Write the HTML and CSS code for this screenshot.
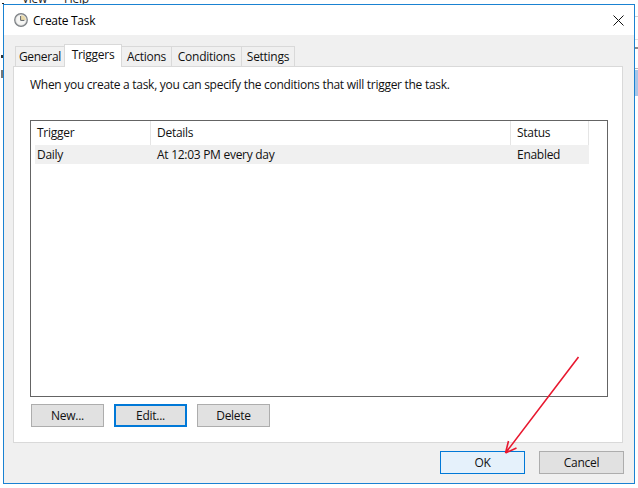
FILE: index.html
```html
<!DOCTYPE html>
<html lang="en">
<head>
<meta charset="utf-8">
<title>Create Task</title>
<link rel="stylesheet" href="styles.css">
</head>
<body>
<div class="behind">View Help</div>
<div class="frag f1"></div>
<div class="frag f2"></div>
<div class="frag f3"></div>
<div class="frag f4"></div>
<div class="frag f5"></div>
<div class="frag f6"></div>
<div class="frag f7"></div>
<div class="frag f8"></div>
<div class="window">
  <header class="titlebar">
    <svg class="clock" width="14" height="14" viewBox="0 0 14 14">
      <circle cx="7" cy="7" r="6.3" fill="#dcdcdc" stroke="#7c8084" stroke-width="1.2"/>
      <circle cx="7" cy="7" r="4.8" fill="#f6f6f4"/>
      <path d="M7 7V2.2A4.8 4.8 0 0 1 11.8 7Z" fill="#e9d9a8"/>
      <path d="M6.6 3V7.4H10.4" fill="none" stroke="#5f6468" stroke-width="1"/>
    </svg>
    <span class="title">Create Task</span>
    <svg class="close" width="11" height="11" viewBox="0 0 11 11"><path d="M.5 .5L10.5 10.5M10.5 .5L.5 10.5" stroke="#111" stroke-width="1" fill="none"/></svg>
  </header>
  <main class="content">
    <nav class="tabs">
      <div class="tab t1">General</div>
      <div class="tab t2 active">Triggers</div>
      <div class="tab t3">Actions</div>
      <div class="tab t4">Conditions</div>
      <div class="tab t5">Settings</div>
    </nav>
    <section class="panel">
      <p class="intro">When you create a task, you can specify the conditions that will trigger the task.</p>
      <div class="list">
        <div class="row head">
          <div class="cell c1">Trigger</div>
          <div class="cell c2">Details</div>
          <div class="cell c3">Status</div>
        </div>
        <div class="row item">
          <div class="cell c1">Daily</div>
          <div class="cell c2">At 12:03 PM every day</div>
          <div class="cell c3">Enabled</div>
        </div>
      </div>
      <div class="actions">
        <button class="btn">New...</button>
        <button class="btn focus">Edit...</button>
        <button class="btn">Delete</button>
      </div>
    </section>
    <footer class="footer">
      <button class="btn wide ok">OK</button>
      <button class="btn wide">Cancel</button>
    </footer>
  </main>
</div>
<svg class="arrow" width="638" height="488" viewBox="0 0 638 488">
  <path d="M578.5 357L505.5 453M505.5 453L508.5 441M505.5 453L516.5 448" fill="none" stroke="#e8182f" stroke-width="1.6"/>
</svg>
</body>
</html>
```
FILE: styles.css
```css
* { box-sizing: border-box; }
html, body { margin: 0; padding: 0; }
body {
  width: 638px;
  height: 488px;
  overflow: hidden;
  background: #fff;
  padding: 4px 0 0 3px;
  position: relative;
  font-family: "Open Sans", "Noto Sans", sans-serif;
  font-size: 12px;
  letter-spacing: -0.28px;
  color: #111;
}
.behind {
  position: absolute;
  left: 22px;
  top: -10px;
  font-size: 12px;
  word-spacing: 14px;
  color: #222;
}
.frag { position: absolute; }
.f1 { left: 635px; top: 16px; width: 3px; height: 1px; background: #d0d0d0; }
.f2 { left: 635px; top: 39px; width: 3px; height: 1px; background: #e0e0e0; }
.f3 { left: 635px; top: 47px; width: 3px; height: 2px; background: #8a8a8a; }
.f4 { left: 635px; top: 68px; width: 3px; height: 1px; background: #b8b8b8; }
.f5 { left: 635px; top: 70px; width: 3px; height: 26px; background: #a9c6e8; }
.f6 { left: 1px; top: 55px; width: 2px; height: 3px; background: #333; }
.f7 { left: 1px; top: 70px; width: 2px; height: 8px; background: #777; }
.f8 { left: 2px; top: 3px; width: 2px; height: 1px; background: #222; }
.window {
  position: relative;
  width: 632px;
  height: 480px;
  border: 1px solid #1a82d2;
  background: #f0f0f0;
  display: flex;
  flex-direction: column;
}
.titlebar {
  height: 30px;
  flex: none;
  background: #fff;
  display: flex;
  align-items: center;
  padding: 0 10px 0 10px;
}
.clock { flex: none; }
.title { margin-left: 5px; font-size: 12px; color: #000; }
.close { margin-left: auto; }
.content {
  flex: 1;
  display: flex;
  flex-direction: column;
  padding: 9px 11px 0 9px;
}
.tabs {
  display: flex;
  height: 22px;
  padding-left: 2px;
  flex: none;
  position: relative;
  z-index: 1;
}
.tab {
  height: 20px;
  margin-top: 2px;
  border: 1px solid #d9d9d9;
  border-bottom: 0;
  border-left-width: 0;
  background: #f0f0f0;
  line-height: 19px;
  text-align: center;
  white-space: nowrap;
}
.tab.t1 { width: 50px; border-left-width: 1px; }
.tab.t2 { width: 58px; }
.tab.t3 { width: 50px; }
.tab.t4 { width: 70px; }
.tab.t5 { width: 53px; }
.tab.active {
  height: 23px;
  margin-top: 0;
  margin-left: -1px;
  background: #fff;
  border-left-width: 1px;
  line-height: 20px;
}
.panel {
  height: 377px;
  flex: none;
  background: #fff;
  border: 1px solid #d9d9d9;
  padding: 10px 14px 0 16px;
  display: flex;
  flex-direction: column;
}
.intro { margin: 0; height: 16px; line-height: 16px; }
.list {
  margin-top: 27px;
  height: 277px;
  flex: none;
  border: 1px solid #646464;
  padding-left: 4px;
}
.row { display: flex; width: 554px; }
.row.head { height: 24px; }
.row.item { height: 19px; background: #f0f0f0; }
.cell { padding-left: 2px; white-space: nowrap; }
.head .cell { line-height: 23px; border-right: 1px solid #e5e5e5; }
.item .cell { line-height: 20px; }
.c1 { width: 116px; }
.c2 { width: 360px; padding-left: 6px; }
.c3 { width: 78px; padding-left: 6px; }
.actions {
  display: flex;
  gap: 10px;
  margin-top: 7px;
  padding-left: 1px;
}
.btn {
  width: 73px;
  height: 23px;
  padding: 0;
  border: 1px solid #adadad;
  background: #e1e1e1;
  font: inherit;
  letter-spacing: inherit;
  color: #111;
}
.btn.focus { border: 2px solid #0078d7; }
.footer {
  display: flex;
  justify-content: flex-end;
  gap: 14px;
  padding: 8px 0 0 0;
  margin-right: -1px;
}
.btn.wide { width: 85px; }
.btn.ok { background: #e5f1fb; border-color: #0078d7; }
.arrow { position: absolute; left: 0; top: 0; pointer-events: none; }
```
